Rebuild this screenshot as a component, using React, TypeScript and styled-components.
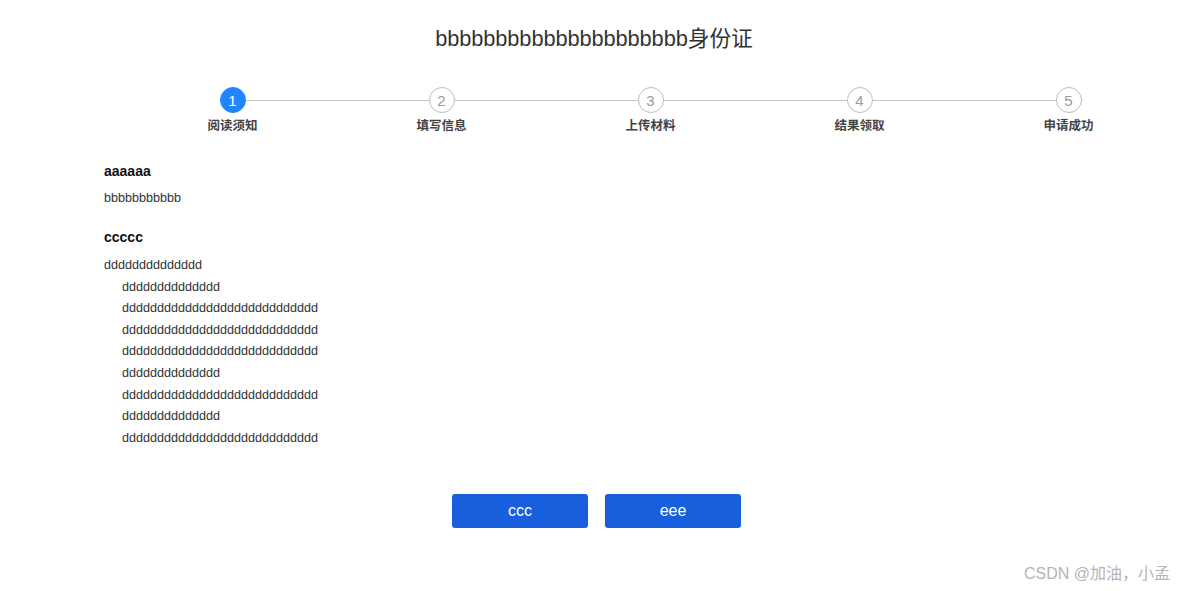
import styled, { createGlobalStyle } from 'styled-components';

const GlobalStyle = createGlobalStyle`
  html, body {
    margin: 0;
    padding: 0;
    background: #fff;
  }
  body {
    font-family: "Liberation Sans", "Noto Sans CJK SC", Arial, sans-serif;
    color: #333;
  }
`;

const steps = ['阅读须知', '填写信息', '上传材料', '结果领取', '申请成功'];

const lines: { text: string; indent: boolean }[] = [
  { text: 'd'.repeat(14), indent: false },
  { text: 'd'.repeat(14), indent: true },
  { text: 'd'.repeat(28), indent: true },
  { text: 'd'.repeat(28), indent: true },
  { text: 'd'.repeat(28), indent: true },
  { text: 'd'.repeat(14), indent: true },
  { text: 'd'.repeat(28), indent: true },
  { text: 'd'.repeat(14), indent: true },
  { text: 'd'.repeat(28), indent: true },
];

export default function App() {
  const active = 0;

  return (
    <Page>
      <GlobalStyle />
      <Title>{'b'.repeat(21)}身份证</Title>

      <Steps>
        {steps.map((name, index) => (
          <Step key={`step-${index}`} last={index === steps.length - 1}>
            <Circle active={index === active}>{index + 1}</Circle>
            <StepLabel>{name}</StepLabel>
          </Step>
        ))}
      </Steps>

      <Content>
        <Heading>aaaaaa</Heading>
        <Paragraph>bbbbbbbbbbb</Paragraph>
        <Heading second>ccccc</Heading>
        <List>
          {lines.map((line, index) => (
            <Line key={`line-${index}`} indent={line.indent}>
              {line.text}
            </Line>
          ))}
        </List>
      </Content>

      <Buttons>
        <Button>ccc</Button>
        <Button>eee</Button>
      </Buttons>

      <Watermark>CSDN @加油，小孟</Watermark>
    </Page>
  );
}

const Page = styled('div')`
  position: relative;
  width: 1184px;
  height: 591px;
  padding-top: 24px;
  box-sizing: border-box;
  overflow: hidden;
`;

const Title = styled('div')`
  text-align: center;
  font-size: 21.8px;
  line-height: 30px;
  color: #333;
  padding-left: 4px;
  letter-spacing: -0.1px;
`;

const Steps = styled('div')`
  display: flex;
  margin: 33px 0 0 128px;
`;

const Step = styled('div')<{ last?: boolean }>`
  position: relative;
  width: 209px;
  display: flex;
  flex-direction: column;
  align-items: center;

  ${(props) =>
    !props.last &&
    `
    &::after {
      content: '';
      position: absolute;
      top: 13px;
      left: calc(50% + 13px);
      width: calc(100% - 26px);
      height: 1px;
      background: #c8c8c8;
    }
  `}
`;

const Circle = styled('div')<{ active?: boolean }>`
  width: 26px;
  height: 26px;
  box-sizing: border-box;
  border-radius: 50%;
  display: flex;
  align-items: center;
  justify-content: center;
  font-size: 15px;
  border: 1px solid ${(props) => (props.active ? '#1f86ff' : '#bdbdbd')};
  background: ${(props) => (props.active ? '#1f86ff' : '#fff')};
  color: ${(props) => (props.active ? '#fff' : '#9a9a9a')};
`;

const StepLabel = styled('div')`
  margin-top: 4px;
  font-size: 12.5px;
  line-height: 18px;
  font-weight: bold;
  color: #444;
`;

const Content = styled('div')`
  margin: 26px 0 0 104px;
`;

const Heading = styled('div')<{ second?: boolean }>`
  font-size: 14px;
  line-height: 20px;
  font-weight: bold;
  color: #111;
  margin-top: ${(props) => (props.second ? '19px' : '0')};
`;

const Paragraph = styled('div')`
  margin-top: 7px;
  font-size: 12.6px;
  line-height: 20px;
  color: #333;
`;

const List = styled('div')`
  margin-top: 8px;
`;

const Line = styled('div')<{ indent?: boolean }>`
  font-size: 12.6px;
  line-height: 21.6px;
  color: #333;
  padding-left: ${(props) => (props.indent ? '18px' : '0')};
`;

const Buttons = styled('div')`
  display: flex;
  justify-content: center;
  gap: 17px;
  margin-top: 45px;
  padding-left: 9px;
`;

const Button = styled('button')`
  width: 136px;
  height: 34px;
  border: none;
  border-radius: 3px;
  background: #175fdc;
  color: #fff;
  font-family: "Liberation Sans", Arial, sans-serif;
  font-size: 16px;
  font-weight: 500;
  cursor: pointer;
`;

const Watermark = styled('div')`
  position: absolute;
  right: 14px;
  bottom: 7px;
  font-size: 16px;
  color: #b4b4b4;
  font-family: "Liberation Sans", "Noto Sans CJK SC", sans-serif;
`;
